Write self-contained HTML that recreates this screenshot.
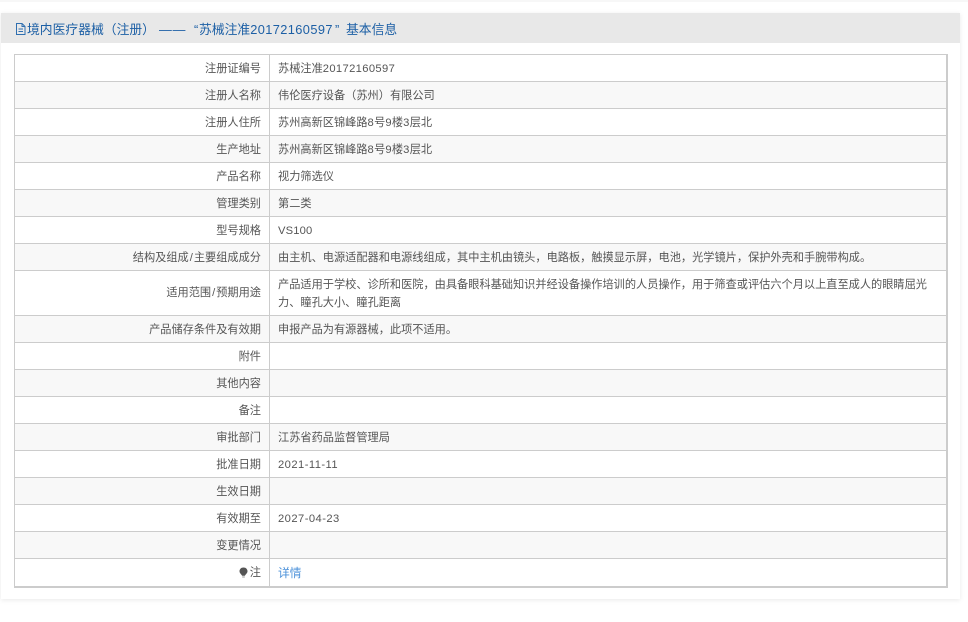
<!DOCTYPE html>
<html lang="zh"><head><meta charset="utf-8">
<style>
html,body{margin:0;padding:0;background:#fff}
body{width:968px;height:622px;position:relative;overflow:hidden;font-family:"Liberation Sans","Noto Sans CJK SC",sans-serif;font-size:11.2px;color:#555}
.strip{position:absolute;left:0;top:0;width:968px;height:2px;background:#f7f7f7}
.panel{position:absolute;left:1px;top:13px;width:959px;height:586px;background:#fff;box-shadow:0 1px 5px rgba(0,0,0,.09)}
.head{position:absolute;left:1px;top:13px;width:959px;height:30px;background:#e8e8e8}
.t{position:absolute;top:13px;height:30px;line-height:34px;font-size:12.8px;color:#1c5fa5;white-space:nowrap}
.r{position:absolute;left:14px;width:933px;box-sizing:border-box;border-top:1px solid #ccc}
.r.alt{background:#f8f8f8}
.l{position:absolute;right:686px;white-space:nowrap;color:#555;top:0;line-height:28px}
.v{position:absolute;left:264px;width:656px;top:0;line-height:28px;color:#555}
.d{position:absolute;left:269px;top:54px;width:1px;height:533px;background:#ccc}
.outer{position:absolute;left:14px;top:54px;width:934px;height:534px;box-sizing:border-box;border:1px solid #ccc;border-right:2px solid #ccc;border-bottom:2px solid #ccc}
a{color:#4a90d9;text-decoration:none;font-size:11.8px}
.n{letter-spacing:.36px}
.s{padding:0 1px}
.p{font-family:"WenQuanYi Zen Hei","Noto Sans CJK SC",sans-serif;line-height:0}
</style></head><body>
<div class="strip"></div>
<div class="panel"></div>
<div class="head"></div>
<svg style="position:absolute;left:15px;top:22px" width="11" height="14" viewBox="0 0 11 14" fill="none" stroke="#2f6fb0" stroke-width="1"><path d="M1.500 1.500H7L10 4.500V12.500H1.500Z M7 1.500V4.500H10 M3.500 7H8 M3.500 9.500H8"/></svg>
<div class="t" style="left:27px">境内医疗器械<span class="p">（</span>注册<span class="p">）</span></div>
<div class="t" style="left:159px;letter-spacing:.8px">——</div>
<div class="t" style="left:194px">“</div>
<div class="t" style="left:199px">苏械注准<span style="letter-spacing:.4px">20172160597</span></div>
<div class="t" style="left:335px">”</div>
<div class="t" style="left:346px">基本信息</div>

<div class="r" style="top:54px;height:27px"><div class="l">注册证编号</div><div class="v">苏械注准<span class="n">20172160597</span></div></div>
<div class="r alt" style="top:81px;height:27px"><div class="l">注册人名称</div><div class="v">伟伦医疗设备<span class="p">（</span>苏州<span class="p">）</span>有限公司</div></div>
<div class="r" style="top:108px;height:27px"><div class="l">注册人住所</div><div class="v">苏州高新区锦峰路<span class="n">8</span>号<span class="n">9</span>楼<span class="n">3</span>层北</div></div>
<div class="r alt" style="top:135px;height:27px"><div class="l">生产地址</div><div class="v">苏州高新区锦峰路<span class="n">8</span>号<span class="n">9</span>楼<span class="n">3</span>层北</div></div>
<div class="r" style="top:162px;height:27px"><div class="l">产品名称</div><div class="v">视力筛选仪</div></div>
<div class="r alt" style="top:189px;height:27px"><div class="l">管理类别</div><div class="v">第二类</div></div>
<div class="r" style="top:216px;height:27px"><div class="l">型号规格</div><div class="v"><span style="letter-spacing:.15px">VS100</span></div></div>
<div class="r alt" style="top:243px;height:27px"><div class="l">结构及组成<span class="s">/</span>主要组成成分</div><div class="v">由主机、电源适配器和电源线组成<span class="p">，</span>其中主机由镜头<span class="p">，</span>电路板<span class="p">，</span>触摸显示屏<span class="p">，</span>电池<span class="p">，</span>光学镜片<span class="p">，</span>保护外壳和手腕带构成。</div></div>
<div class="r" style="top:270px;height:45px"><div class="l" style="line-height:45px">适用范围<span class="s">/</span>预期用途</div><div class="v" style="line-height:18px;top:5px">产品适用于学校、诊所和医院<span class="p">，</span>由具备眼科基础知识并经设备操作培训的人员操作<span class="p">，</span>用于筛查或评估六个月以上直至成人的眼睛屈光力、瞳孔大小、瞳孔距离</div></div>
<div class="r alt" style="top:315px;height:27px"><div class="l">产品储存条件及有效期</div><div class="v">申报产品为有源器械<span class="p">，</span>此项不适用。</div></div>
<div class="r" style="top:342px;height:27px"><div class="l">附件</div></div>
<div class="r alt" style="top:369px;height:27px"><div class="l">其他内容</div></div>
<div class="r" style="top:396px;height:27px"><div class="l">备注</div></div>
<div class="r alt" style="top:423px;height:27px"><div class="l">审批部门</div><div class="v">江苏省药品监督管理局</div></div>
<div class="r" style="top:450px;height:27px"><div class="l">批准日期</div><div class="v"><span style="letter-spacing:.45px">2021-11-11</span></div></div>
<div class="r alt" style="top:477px;height:27px"><div class="l">生效日期</div></div>
<div class="r" style="top:504px;height:27px"><div class="l">有效期至</div><div class="v"><span style="letter-spacing:.45px">2027-04-23</span></div></div>
<div class="r alt" style="top:531px;height:27px"><div class="l">变更情况</div></div>
<div class="r" style="top:558px;height:29px"><div class="l">注</div><div class="v" style="line-height:28px"><a href="#">详情</a></div></div>
<svg style="position:absolute;left:239px;top:567px" width="9" height="11" viewBox="0 0 9 11"><path d="M4.500 .5C2 .5.5 2.300.5 4.300c0 2 2 3 2.600 4.500h2.800C6.500 7.300 8.500 6.300 8.500 4.300 8.500 2.300 7 .5 4.500 .5Z" fill="#555"/><path d="M3.200 9.500h2.600v1H3.200z" fill="#999"/></svg>
<div class="d"></div>
<div class="outer"></div>
</body></html>
